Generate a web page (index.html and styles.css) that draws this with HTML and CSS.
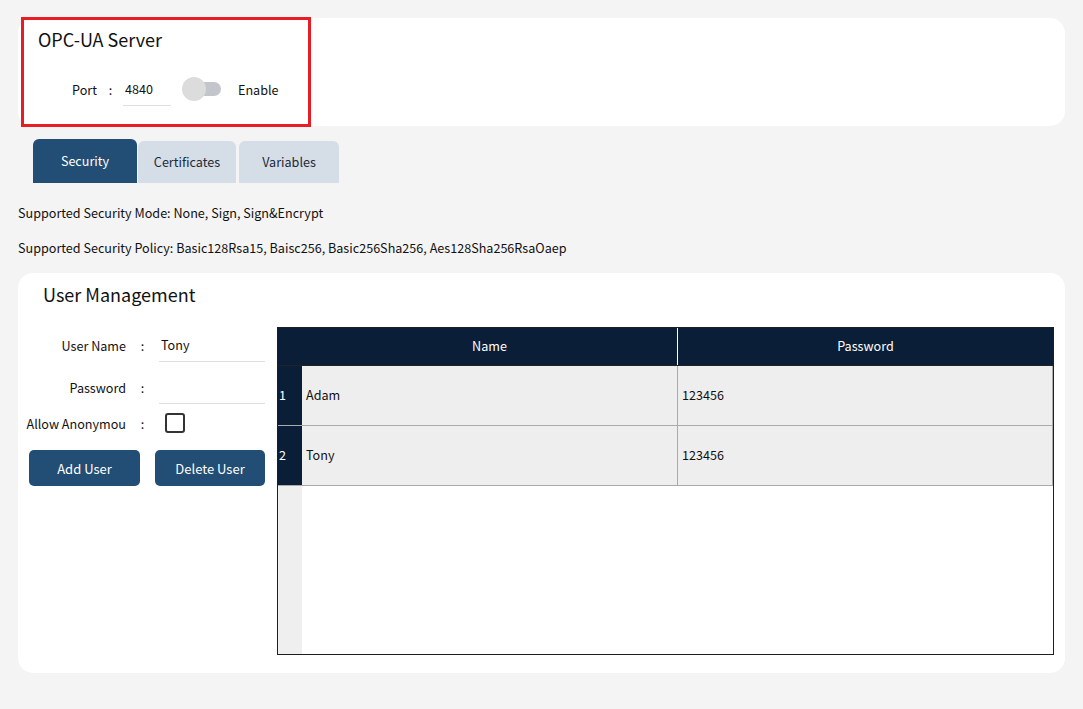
FILE: index.html
```html
<!DOCTYPE html>
<html lang="en">
<head>
    <meta charset="UTF-8">
    <meta name="viewport" content="width=device-width, initial-scale=1.0">
    <title>OPC-UA Server</title>
    <link rel="stylesheet" href="styles.css">
</head>
<body>
    <div class="card server-card">
        <div class="server-box">
            <h1 class="card-title">OPC-UA Server</h1>
            <div class="port-row">
                <span class="port-label">Port</span>
                <span class="colon">:</span>
                <div class="line-input port-input">4840</div>
                <div class="toggle">
                    <div class="toggle-knob"></div>
                </div>
                <span class="toggle-label">Enable</span>
            </div>
        </div>
    </div>

    <div class="tabs">
        <div class="tab active">Security</div>
        <div class="tab">Certificates</div>
        <div class="tab tab-last">Variables</div>
    </div>

    <p class="info first">Supported Security Mode: None, Sign, Sign&amp;Encrypt</p>
    <p class="info">Supported Security Policy: Basic128Rsa15, Baisc256, Basic256Sha256, Aes128Sha256RsaOaep</p>

    <div class="card user-card">
        <h2 class="card-title user-title">User Management</h2>
        <div class="user-body">
            <div class="user-form">
                <div class="form-row">
                    <span class="form-label">User Name</span>
                    <span class="colon">:</span>
                    <div class="line-input">Tony</div>
                </div>
                <div class="form-row">
                    <span class="form-label">Password</span>
                    <span class="colon">:</span>
                    <div class="line-input"></div>
                </div>
                <div class="form-row check-row">
                    <span class="form-label">Allow Anonymou</span>
                    <span class="colon">:</span>
                    <div class="checkbox-cell"><div class="checkbox"></div></div>
                </div>
                <div class="buttons">
                    <button class="btn">Add User</button>
                    <button class="btn">Delete User</button>
                </div>
            </div>

            <div class="user-table">
                <div class="trow thead">
                    <div class="idx"></div>
                    <div class="cell name-col">Name</div>
                    <div class="cell">Password</div>
                </div>
                <div class="trow">
                    <div class="idx">1</div>
                    <div class="cell name-col">Adam</div>
                    <div class="cell">123456</div>
                </div>
                <div class="trow">
                    <div class="idx">2</div>
                    <div class="cell name-col">Tony</div>
                    <div class="cell">123456</div>
                </div>
                <div class="filler">
                    <div class="filler-idx"></div>
                    <div></div>
                </div>
            </div>
        </div>
    </div>
</body>
</html>
```

FILE: styles.css
```css
* {
    margin: 0;
    padding: 0;
    box-sizing: border-box;
}

body {
    background-color: #f4f4f4;
    padding: 18px 18px 0 18px;
    font-family: "Noto Sans CJK SC", "Open Sans", sans-serif;
    font-size: 12.6px;
    color: #111;
}

.card {
    background-color: #fff;
    border-radius: 15px;
}

.card-title {
    font-size: 18px;
    font-weight: normal;
    line-height: 24px;
    color: #111;
}

/* server settings */
.server-card {
    height: 108px;
    display: flex;
}

.server-box {
    width: 290px;
    height: 110px;
    margin: -1px 0 -1px 3px;
    border: 3px solid #e81c24;
    padding: 7px 14px 0 14px;
}

.port-row {
    display: flex;
    align-items: center;
    margin-top: 22px;
    margin-left: 34px;
    height: 32px;
}

.port-label {
    width: 26px;
}

.colon {
    width: 25px;
    text-align: center;
}

.line-input {
    height: 34px;
    line-height: 33px;
    padding-left: 2px;
    border-bottom: 1px solid #e0e0e0;
}

.port-input {
    width: 48px;
    height: 32px;
    line-height: 30px;
    margin-top: 1px;
}

.toggle {
    position: relative;
    width: 38px;
    height: 14px;
    margin-left: 12px;
    border-radius: 7px;
    background-color: #c2c6cc;
}

.toggle-knob {
    position: absolute;
    left: -1px;
    top: -5px;
    width: 24px;
    height: 24px;
    border-radius: 50%;
    background-color: #dcdcdc;
}

.toggle-label {
    margin-left: 17px;
}

/* tabs */
.tabs {
    display: flex;
    align-items: flex-end;
    margin: 13px 0 0 15px;
}

.tab {
    width: 98px;
    height: 42px;
    line-height: 41px;
    text-align: center;
    background-color: #d5dde7;
    color: #1b2a3a;
    border-radius: 6px 6px 0 0;
    margin-left: 1px;
}

.tab.active {
    width: 104px;
    height: 44px;
    line-height: 43px;
    margin-left: 0;
    background-color: #224d74;
    color: #fff;
}

.tab-last {
    width: 100px;
    margin-left: 3px;
}

.info {
    line-height: 18px;
    margin-top: 17px;
}

.info.first {
    margin-top: 21px;
}

/* user management */
.user-card {
    height: 400px;
    margin-top: 16px;
    padding: 9px 11px 18px 11px;
}

.user-title {
    margin-left: 14px;
}

.user-body {
    display: flex;
    margin-top: 21px;
}

.user-form {
    width: 252px;
    margin-left: -4px;
    padding-top: 1px;
}

.form-row {
    display: grid;
    grid-template-columns: 101px 33px 106px;
    align-items: center;
    margin-bottom: 8px;
}

.form-label {
    text-align: right;
    white-space: nowrap;
}

.form-row .colon {
    width: auto;
}

.check-row {
    height: 26px;
    margin-top: -2px;
    margin-bottom: 14px;
}

.checkbox-cell {
    padding-left: 6px;
}

.checkbox {
    width: 20px;
    height: 20px;
    border: 2px solid #333;
    border-radius: 3px;
}

.buttons {
    display: flex;
    gap: 15px;
    margin-left: 4px;
}

.btn {
    width: 111px;
    height: 36px;
    border: none;
    border-radius: 5px;
    background-color: #224d74;
    color: #fff;
    font-family: inherit;
    font-size: 13px;
}

.btn + .btn {
    width: 110px;
}

.user-table {
    width: 777px;
    height: 328px;
    border: 1px solid #1e1e1e;
    display: flex;
    flex-direction: column;
}

.trow {
    display: grid;
    grid-template-columns: 24px 376px 1fr;
    height: 60px;
    background-color: #eee;
    border-bottom: 1px solid #aaa;
    border-right: 1px solid #aaa;
}

.trow .cell {
    display: flex;
    align-items: center;
    padding: 0 0 2px 4px;
}

.trow .name-col {
    border-right: 1px solid #aaa;
}

.idx {
    background-color: #0a1e37;
    color: #fff;
    display: flex;
    align-items: center;
    padding: 0 0 2px 1px;
}

.thead {
    height: 38px;
    background-color: #0a1e37;
    color: #fff;
    border-bottom: 1px solid #222;
    border-right: none;
}

.thead .cell {
    justify-content: center;
    padding: 0 0 2px 0;
}

.thead .name-col {
    border-right: 1px solid #fff;
}

.filler {
    flex: 1;
    display: grid;
    grid-template-columns: 24px 1fr;
    background-color: #fff;
}

.filler-idx {
    background-color: #efefef;
}
```
